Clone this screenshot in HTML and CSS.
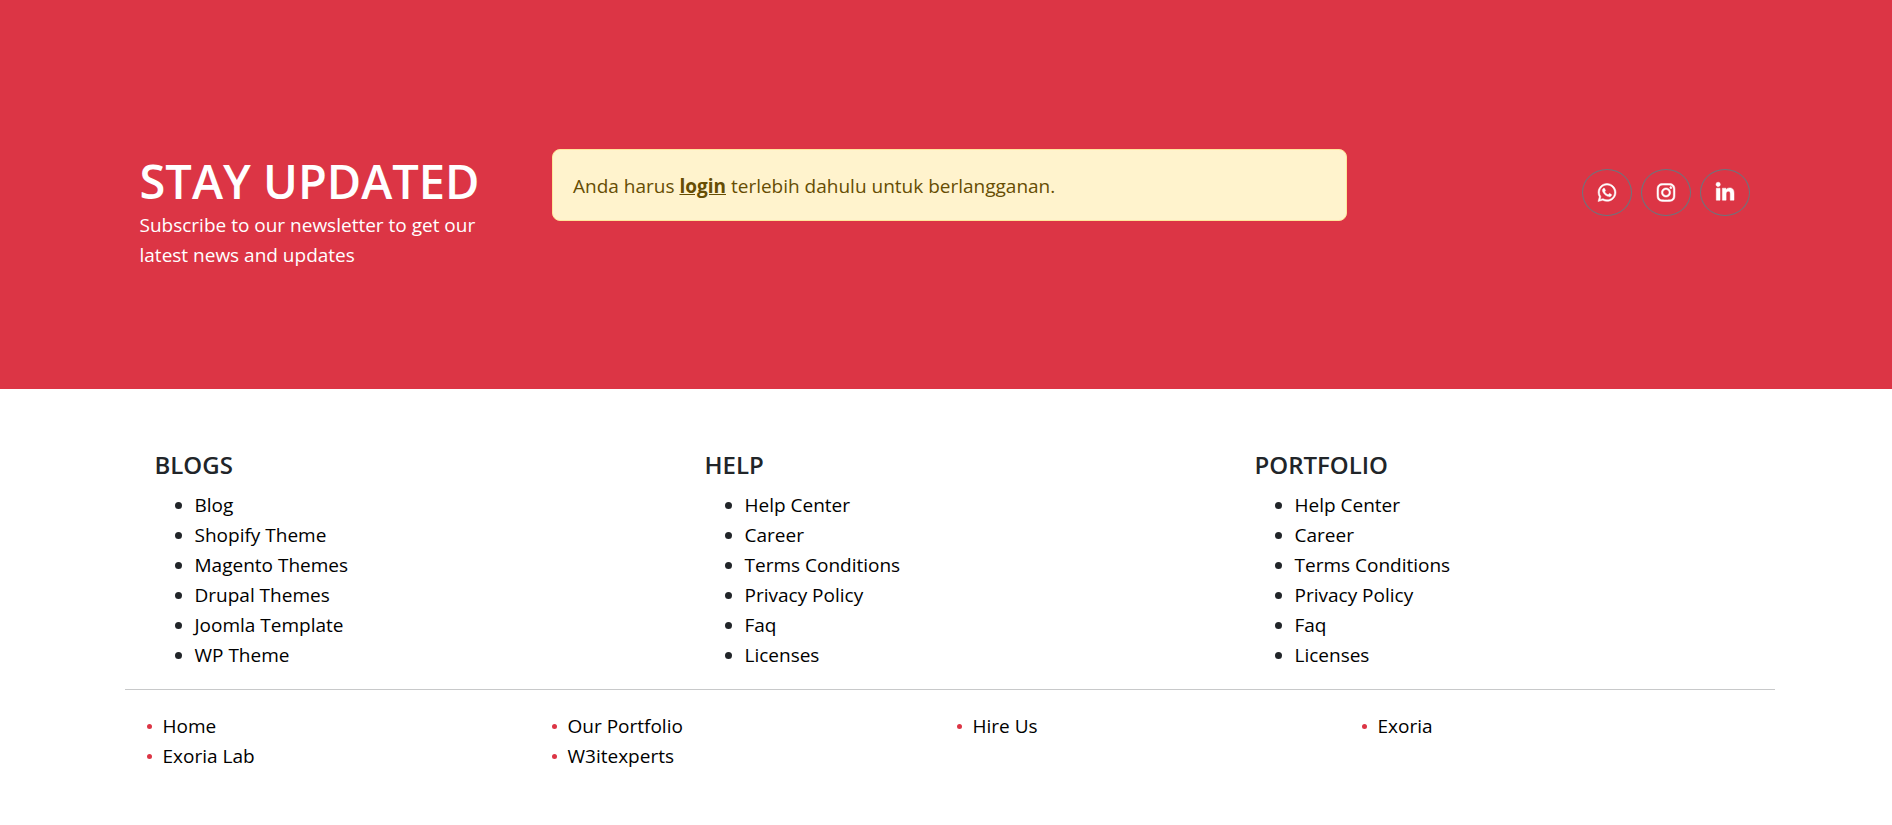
FILE: index.html
```html
<!DOCTYPE html>
<html lang="id">
<head>
<meta charset="utf-8">
<meta name="viewport" content="width=device-width, initial-scale=1">
<title>Exoria</title>
<link rel="stylesheet" href="styles.css">
</head>
<body>
<section class="newsletter">
  <div class="container newsletter-row">
    <div class="newsletter-intro">
      <h1 class="newsletter-title">STAY UPDATED</h1>
      <p class="newsletter-text">Subscribe to our newsletter to get our latest news and updates</p>
    </div>
    <div class="newsletter-form">
      <div class="alert" role="alert">Anda harus <a class="alert-link" href="#login">login</a> terlebih dahulu untuk berlangganan.</div>
    </div>
    <div class="social">
      <a class="social-link" href="#whatsapp" aria-label="WhatsApp">
        <svg class="social-icon" viewBox="0 0 448 512" aria-hidden="true"><path d="M380.9 97.1C339 55.1 283.2 32 223.9 32c-122.4 0-222 99.6-222 222 0 39.1 10.2 77.3 29.6 111L0 480l117.7-30.9c32.4 17.7 68.9 27 106.1 27h.1c122.3 0 224.1-99.6 224.1-222 0-59.3-25.2-115-67.1-157zm-157 341.6c-33.2 0-65.7-8.9-94-25.7l-6.7-4-69.8 18.3L72 359.2l-4.4-7c-18.5-29.4-28.2-63.3-28.2-98.2 0-101.7 82.8-184.5 184.6-184.5 49.3 0 95.6 19.2 130.4 54.1 34.8 34.9 56.2 81.2 56.1 130.5 0 101.8-84.9 184.6-186.6 184.6zm101.2-138.2c-5.5-2.8-32.8-16.2-37.9-18-5.1-1.9-8.8-2.8-12.5 2.8-3.7 5.6-14.3 18-17.6 21.8-3.2 3.7-6.5 4.2-12 1.4-32.6-16.3-54-29.1-75.5-66-5.7-9.8 5.7-9.1 16.3-30.3 1.8-3.7.9-6.9-.5-9.7-1.4-2.8-12.5-30.1-17.1-41.2-4.5-10.8-9.1-9.3-12.5-9.5-3.2-.2-6.9-.2-10.6-.2-3.7 0-9.7 1.4-14.8 6.9-5.1 5.6-19.4 19-19.4 46.3 0 27.3 19.9 53.7 22.6 57.4 2.8 3.7 39.1 59.7 94.8 83.8 35.2 15.2 49 16.5 66.6 13.9 10.7-1.6 32.8-13.4 37.4-26.4 4.6-13 4.6-24.1 3.2-26.4-1.3-2.5-5-3.9-10.5-6.6z"/></svg>
      </a>
      <a class="social-link" href="#instagram" aria-label="Instagram">
        <svg class="social-icon" viewBox="0 0 448 512" aria-hidden="true"><path d="M224.1 141c-63.6 0-114.9 51.3-114.9 114.9s51.3 114.9 114.9 114.9S339 319.5 339 255.9 287.7 141 224.1 141zm0 189.6c-41.1 0-74.7-33.5-74.7-74.7s33.5-74.7 74.7-74.7 74.7 33.5 74.7 74.7-33.6 74.7-74.7 74.7zm146.4-194.3c0 14.9-12 26.8-26.8 26.8-14.9 0-26.8-12-26.8-26.8s12-26.8 26.8-26.8 26.8 12 26.8 26.8zm76.1 27.2c-1.7-35.9-9.9-67.7-36.2-93.9-26.2-26.2-58-34.4-93.9-36.2-37-2.1-147.9-2.1-184.9 0-35.8 1.7-67.6 9.9-93.9 36.1s-34.4 58-36.2 93.9c-2.1 37-2.1 147.9 0 184.9 1.7 35.9 9.9 67.7 36.2 93.9s58 34.4 93.9 36.2c37 2.1 147.9 2.1 184.9 0 35.9-1.7 67.7-9.9 93.9-36.2 26.2-26.2 34.4-58 36.2-93.9 2.1-37 2.1-147.8 0-184.8zM398.8 388c-7.8 19.6-22.9 34.7-42.6 42.6-29.5 11.7-99.5 9-132.1 9s-102.7 2.6-132.1-9c-19.6-7.8-34.7-22.9-42.6-42.6-11.7-29.5-9-99.5-9-132.1s-2.6-102.7 9-132.1c7.8-19.6 22.9-34.7 42.6-42.6 29.5-11.7 99.5-9 132.1-9s102.7-2.6 132.1 9c19.6 7.8 34.7 22.9 42.6 42.6 11.7 29.5 9 99.5 9 132.1s2.7 102.7-9 132.1z"/></svg>
      </a>
      <a class="social-link" href="#linkedin" aria-label="LinkedIn">
        <svg class="social-icon" viewBox="0 0 448 512" aria-hidden="true"><path d="M100.28 448H7.4V148.9h92.88zM53.79 108.1C24.09 108.1 0 83.5 0 53.8a53.79 53.79 0 0 1 107.58 0c0 29.7-24.1 54.3-53.79 54.3zM447.9 448h-92.68V302.4c0-34.7-.7-79.2-48.29-79.2-48.29 0-55.69 37.7-55.69 76.7V448h-92.78V148.9h89.08v40.8h1.3c12.4-23.5 42.69-48.3 87.88-48.3 94 0 111.28 61.9 111.28 142.3V448z"/></svg>
      </a>
    </div>
  </div>
</section>
<footer class="footer">
  <div class="container">
    <div class="footer-columns">
      <nav class="footer-column" aria-labelledby="blogs">
        <h2 class="footer-title" id="blogs">BLOGS</h2>
        <ul class="footer-list">
          <li><a class="link" href="#">Blog</a></li>
          <li><a class="link" href="#">Shopify Theme</a></li>
          <li><a class="link" href="#">Magento Themes</a></li>
          <li><a class="link" href="#">Drupal Themes</a></li>
          <li><a class="link" href="#">Joomla Template</a></li>
          <li><a class="link" href="#">WP Theme</a></li>
        </ul>
      </nav>
      <nav class="footer-column" aria-labelledby="help">
        <h2 class="footer-title" id="help">HELP</h2>
        <ul class="footer-list">
          <li><a class="link" href="#">Help Center</a></li>
          <li><a class="link" href="#">Career</a></li>
          <li><a class="link" href="#">Terms Conditions</a></li>
          <li><a class="link" href="#">Privacy Policy</a></li>
          <li><a class="link" href="#">Faq</a></li>
          <li><a class="link" href="#">Licenses</a></li>
        </ul>
      </nav>
      <nav class="footer-column" aria-labelledby="portfolio">
        <h2 class="footer-title" id="portfolio">PORTFOLIO</h2>
        <ul class="footer-list">
          <li><a class="link" href="#">Help Center</a></li>
          <li><a class="link" href="#">Career</a></li>
          <li><a class="link" href="#">Terms Conditions</a></li>
          <li><a class="link" href="#">Privacy Policy</a></li>
          <li><a class="link" href="#">Faq</a></li>
          <li><a class="link" href="#">Licenses</a></li>
        </ul>
      </nav>
    </div>
    <hr class="divider">
    <ul class="site-links">
      <li class="site-item"><a class="link" href="#">Home</a></li>
      <li class="site-item"><a class="link" href="#">Our Portfolio</a></li>
      <li class="site-item"><a class="link" href="#">Hire Us</a></li>
      <li class="site-item"><a class="link" href="#">Exoria</a></li>
      <li class="site-item"><a class="link" href="#">Exoria Lab</a></li>
      <li class="site-item"><a class="link" href="#">W3itexperts</a></li>
    </ul>
  </div>
</footer>
</body>
</html>
```

FILE: styles.css
```css
* {
  box-sizing: border-box;
}

body {
  margin: 0;
  background: #fff;
  color: #212529;
  font-family: "Segoe UI", "Open Sans", "Noto Sans", sans-serif;
  font-size: 19px;
  line-height: 30px;
}

h1, h2, p, ul {
  margin: 0;
  padding: 0;
}

.newsletter,
.footer {
  padding-left: 7px;
}

.container {
  max-width: 1650px;
  margin: 0 auto;
}

.newsletter {
  padding-top: 149px;
  padding-bottom: 119px;
  background: #dc3545;
  color: #fff;
}

.newsletter-row {
  display: grid;
  grid-template-columns: 1fr 2fr 1fr;
  align-items: start;
}

.newsletter-intro,
.newsletter-form {
  padding: 0 15px;
}

.newsletter-title {
  padding-top: 3px;
  font-size: 47px;
  font-weight: 600;
  line-height: 58px;
  white-space: nowrap;
}

.alert {
  padding: 21px 20px 19px;
  border: 1px solid #ffe69c;
  border-radius: 8px;
  background: #fff3cd;
  color: #664d03;
}

.alert-link {
  color: inherit;
  font-weight: 700;
}

.social {
  display: flex;
  justify-content: flex-end;
  gap: 9px;
  padding: 20px 25px 0 0;
}

.social-link {
  display: flex;
  align-items: center;
  justify-content: center;
  width: 50px;
  height: 47px;
  border: 1px solid #6c757d;
  border-radius: 50%;
  color: #fff;
}

.social-icon {
  width: 18px;
  height: 21px;
  overflow: visible;
  fill: currentColor;
  stroke: currentColor;
  stroke-width: 12;
}

.footer {
  padding-top: 61px;
  padding-bottom: 40px;
}

.footer-columns {
  display: grid;
  grid-template-columns: repeat(3, 1fr);
}

.footer-column {
  padding-left: 30px;
}

.footer-title {
  margin-bottom: 10px;
  font-size: 24px;
  font-weight: 600;
  line-height: 30px;
}

.footer-list {
  padding-left: 40px;
}

.link {
  color: #000;
  text-decoration: none;
}

.divider {
  margin: 19px 0 21px;
  border: 0;
  border-top: 1px solid #c8c9ca;
}

.site-links {
  display: grid;
  grid-template-columns: repeat(4, 1fr);
  padding: 0 8px 0 22px;
  list-style: none;
}

.site-item {
  display: flex;
  align-items: center;
  gap: 11px;
}

.site-item::before {
  content: "";
  width: 5px;
  height: 5px;
  border-radius: 50%;
  background: #dc3545;
}
```
